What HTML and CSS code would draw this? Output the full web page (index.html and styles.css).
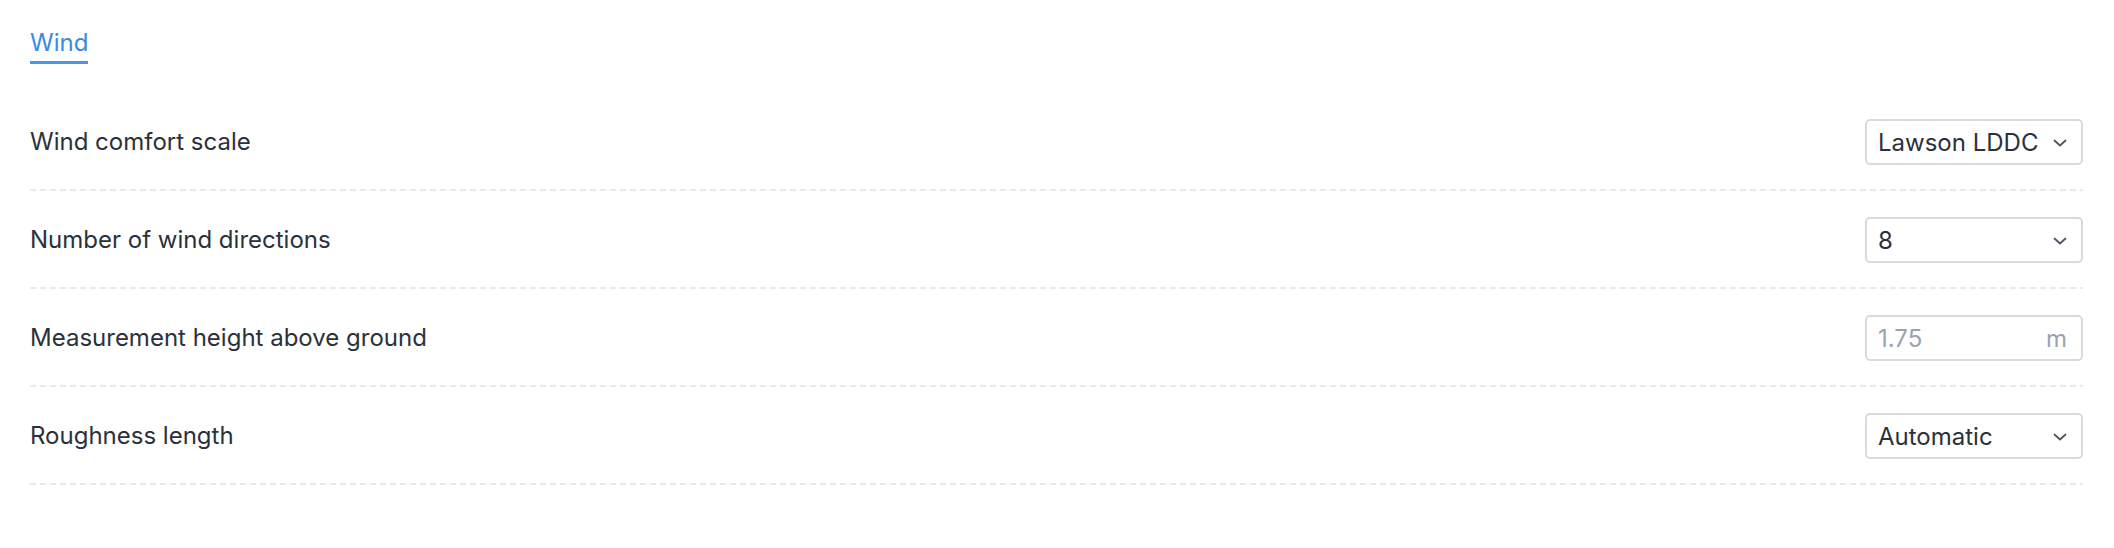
FILE: index.html
```html
<!DOCTYPE html>
<html>
<head>
<meta charset="utf-8">
<link rel="stylesheet" href="styles.css">
</head>
<body>
<div class="page">
  <div class="tabs">
    <div class="tab active">Wind</div>
  </div>
  <div class="rows">
    <div class="row">
      <div class="label">Wind comfort scale</div>
      <div class="control select">
        <span class="value">Lawson LDDC</span>
        <svg class="chev" viewBox="0 0 14 8" width="14" height="8"><path d="M1.5 1.5 L7 6.5 L12.5 1.5" fill="none" stroke="#4b5563" stroke-width="1.8" stroke-linecap="round" stroke-linejoin="round"/></svg>
      </div>
    </div>
    <div class="row">
      <div class="label">Number of wind directions</div>
      <div class="control select">
        <span class="value">8</span>
        <svg class="chev" viewBox="0 0 14 8" width="14" height="8"><path d="M1.5 1.5 L7 6.5 L12.5 1.5" fill="none" stroke="#4b5563" stroke-width="1.8" stroke-linecap="round" stroke-linejoin="round"/></svg>
      </div>
    </div>
    <div class="row">
      <div class="label">Measurement height above ground</div>
      <div class="control input">
        <span class="placeholder">1.75</span>
        <span class="unit">m</span>
      </div>
    </div>
    <div class="row">
      <div class="label">Roughness length</div>
      <div class="control select">
        <span class="value">Automatic</span>
        <svg class="chev" viewBox="0 0 14 8" width="14" height="8"><path d="M1.5 1.5 L7 6.5 L12.5 1.5" fill="none" stroke="#4b5563" stroke-width="1.8" stroke-linecap="round" stroke-linejoin="round"/></svg>
      </div>
    </div>
  </div>
</div>
</body>
</html>
```

FILE: styles.css
```css
html, body {
  margin: 0;
  padding: 0;
  background: #ffffff;
}
body {
  font-family: Inter, "Noto Sans", sans-serif;
  color: #2b313b;
  font-size: 24px;
}
.page {
  padding: 0 31px 0 30px;
}
.tabs {
  display: flex;
  padding-top: 25px;
  height: 69px;
  box-sizing: border-box;
}
.tab {
  color: #3a8be0;
  line-height: 36px;
  height: 39px;
  box-sizing: border-box;
  border-bottom: 3px solid #4a95e6;
}
.rows {
  display: flex;
  flex-direction: column;
  margin-top: 24px;
}
.row {
  display: flex;
  align-items: center;
  justify-content: space-between;
  height: 98px;
  box-sizing: border-box;
  padding-top: 2px;
  padding-bottom: 2px;
  background-image: linear-gradient(to right, #e8eaef 60%, transparent 60%);
  background-size: 10px 2px;
  background-repeat: repeat-x;
  background-position: left bottom;
}
.label {
  line-height: 30px;
}
.control {
  width: 218px;
  height: 46px;
  box-sizing: border-box;
  border: 2px solid #d6dae1;
  border-radius: 5px;
  display: flex;
  align-items: center;
  justify-content: space-between;
  padding: 0 14px 0 11px;
}
.chev {
  display: block;
  margin-top: 2px;
}
.placeholder, .unit {
  color: #9aa3b1;
}
```
